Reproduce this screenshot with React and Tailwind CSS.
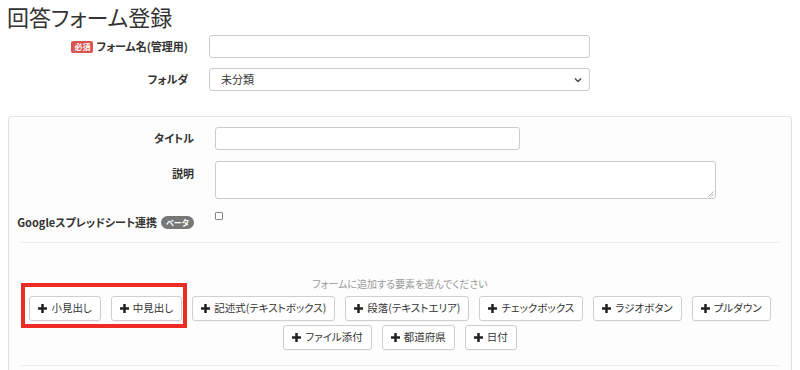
import React from 'react';

const font = { fontFamily: '"Noto Sans CJK JP", "Noto Sans", sans-serif' };

function Plus() {
  return (
    <svg width="9" height="9" viewBox="0 0 10 10" className="shrink-0">
      <path d="M3.6 0h2.8v3.6H10v2.8H6.4V10H3.6V6.4H0V3.6h3.6z" fill="#222" />
    </svg>
  );
}

function AddButton({ label }) {
  return (
    <button className="shrink-0 whitespace-nowrap h-[25px] flex items-center gap-[4px] px-[8px] border border-[#cfcfcf] rounded-[3px] bg-white text-[10.5px] text-[#333] leading-none shadow-[0_1px_1px_rgba(0,0,0,0.03)]">
      <Plus />
      <span>{label}</span>
    </button>
  );
}

export default function App() {
  const row1 = ['小見出し', '中見出し', '記述式(テキストボックス)', '段落(テキストエリア)', 'チェックボックス', 'ラジオボタン', 'プルダウン'];
  const row2 = ['ファイル添付', '都道府県', '日付'];

  return (
    <div className="relative w-[800px] h-[370px] overflow-hidden bg-white text-[#333] [font-feature-settings:'palt']" style={font}>
      {/* Page title */}
      <h1 className="pl-[7px] pt-[2px] text-[22px] leading-[28px] text-[#333] font-normal">回答フォーム登録</h1>

      {/* Top form */}
      <div className="mt-[5px] flex flex-col gap-[10px]">
        <div className="flex items-center">
          <div className="w-[188px] flex justify-end items-center gap-[3px] whitespace-nowrap">
            <span className="bg-[#d9534f] text-white text-[8px] font-bold px-[3px] h-[12px] leading-[12px] rounded-[2px]">必須</span>
            <span className="text-[11px] font-bold">フォーム名(管理用)</span>
          </div>
          <div className="ml-[21px] w-[381px] h-[23px] border border-[#ccc] rounded-[3px] bg-white" />
        </div>
        <div className="flex items-center">
          <div className="w-[188px] text-right text-[11px] font-bold">フォルダ</div>
          <div className="ml-[21px] w-[381px] h-[23px] border border-[#ccc] rounded-[3px] bg-white flex items-center justify-between pl-[11px] pr-[7px]">
            <span className="text-[11px]">未分類</span>
            <svg width="8" height="6" viewBox="0 0 8 6">
              <path d="M1 1.5l3 3 3-3" stroke="#444" strokeWidth="1.4" fill="none" />
            </svg>
          </div>
        </div>
      </div>

      {/* Panel */}
      <div className="mt-[25px] mx-[8px] border border-[#e3e3e3] rounded-[3px] bg-[#fdfdfd] h-[300px] px-[11px]">
        <div className="pt-[10px] flex flex-col">
          <div className="flex items-center">
            <div className="w-[174px] text-right text-[11px] font-bold">タイトル</div>
            <div className="ml-[21px] w-[305px] h-[23px] border border-[#ccc] rounded-[3px] bg-white" />
          </div>
          <div className="mt-[11px] flex items-start">
            <div className="w-[174px] text-right text-[11px] font-bold pt-[4px]">説明</div>
            <div className="ml-[21px] w-[501px] h-[38px] border border-[#ccc] rounded-[3px] bg-white relative">
              <svg width="6" height="6" viewBox="0 0 6 6" className="absolute right-[1px] bottom-[1px]">
                <path d="M5.5 0.5L0.5 5.5M5.5 3L3 5.5" stroke="#999" strokeWidth="0.8" />
              </svg>
            </div>
          </div>
          <div className="mt-[12px] flex items-start">
            <div className="w-[174px] flex justify-end items-center gap-[4px] pt-[3px] whitespace-nowrap">
              <span className="text-[11px] font-bold">Googleスプレッドシート連携</span>
              <span className="bg-[#777] text-white text-[8px] font-bold px-[5px] h-[13px] leading-[13px] rounded-full">ベータ</span>
            </div>
            <div className="ml-[21px] w-[8px] h-[8px] border border-[#888] rounded-[1px] bg-white mt-[1px]" />
          </div>
        </div>

        <div className="mt-[11px] border-t border-[#eee]" />

        <div className="mt-[34px] text-center text-[10px] text-[#999] leading-[14px]">フォームに追加する要素を選んでください</div>

        <div className="mt-[5px] flex flex-col items-center gap-[4px]">
          <div className="flex gap-[10px]">
            {row1.map((l) => <AddButton key={l} label={l} />)}
          </div>
          <div className="flex gap-[10px]">
            {row2.map((l) => <AddButton key={l} label={l} />)}
          </div>
        </div>

        <div className="mt-[15px] border-t border-[#eee]" />
      </div>

      {/* Annotation highlight */}
      <div className="absolute left-[21px] top-[283px] w-[166px] h-[45px] border-[4px] border-[#ee2b24] pointer-events-none" />
    </div>
  );
}
